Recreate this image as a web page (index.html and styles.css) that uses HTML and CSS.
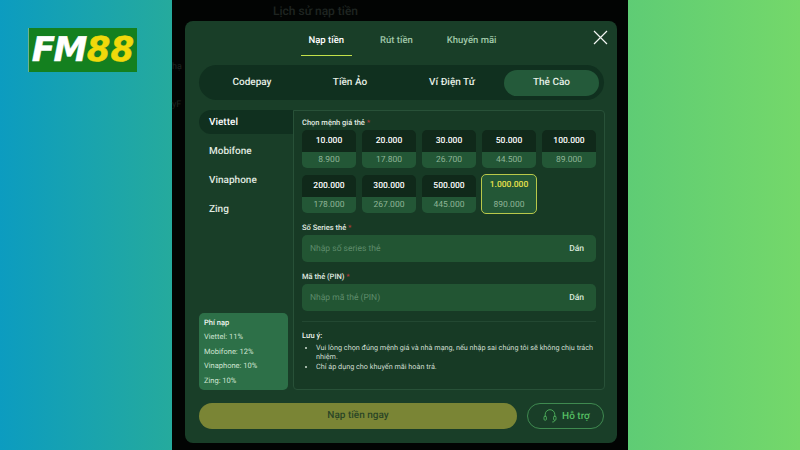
FILE: index.html
```html
<!DOCTYPE html>
<html lang="vi">
<head>
    <meta charset="UTF-8">
    <meta name="viewport" content="width=device-width, initial-scale=1.0">
    <title>FM88 - Nạp tiền</title>
    <link rel="stylesheet" href="styles.css">
</head>
<body>
    <div class="side-left">
        <div class="logo"><span class="logo-fm">FM</span><span class="logo-num">88</span></div>
    </div>

    <div class="stage">
        <div class="behind-title">Lịch sử nạp tiền</div>
        <div class="behind-a">hạ</div>
        <div class="behind-b">yF</div>

        <div class="modal">
            <div class="tabs">
                <div class="tab active">Nạp tiền</div>
                <div class="tab">Rút tiền</div>
                <div class="tab">Khuyến mãi</div>
            </div>
            <svg class="close" width="15" height="15" viewBox="0 0 15 15">
                <path d="M1 1L14 14M14 1L1 14" stroke="#f2f5f2" stroke-width="1.2" fill="none"/>
            </svg>

            <div class="methods">
                <div class="method">Codepay</div>
                <div class="method">Tiền Ảo</div>
                <div class="method">Ví Điện Tử</div>
                <div class="method active">Thẻ Cào</div>
            </div>

            <div class="content">
                <div class="carriers">
                    <div class="carrier active">Viettel</div>
                    <div class="carrier">Mobifone</div>
                    <div class="carrier">Vinaphone</div>
                    <div class="carrier">Zing</div>
                    <div class="fees">
                        <div class="fees-title">Phí nạp</div>
                        <div>Viettel: 11%</div>
                        <div>Mobifone: 12%</div>
                        <div>Vinaphone: 10%</div>
                        <div>Zing: 10%</div>
                    </div>
                </div>

                <div class="panel">
                    <div class="label label-first">Chọn mệnh giá thẻ <span class="req">*</span></div>
                    <div class="cards">
                        <div class="card"><div class="card-top">10.000</div><div class="card-bottom">8.900</div></div>
                        <div class="card"><div class="card-top">20.000</div><div class="card-bottom">17.800</div></div>
                        <div class="card"><div class="card-top">30.000</div><div class="card-bottom">26.700</div></div>
                        <div class="card"><div class="card-top">50.000</div><div class="card-bottom">44.500</div></div>
                        <div class="card"><div class="card-top">100.000</div><div class="card-bottom">89.000</div></div>
                        <div class="card"><div class="card-top">200.000</div><div class="card-bottom">178.000</div></div>
                        <div class="card"><div class="card-top">300.000</div><div class="card-bottom">267.000</div></div>
                        <div class="card"><div class="card-top">500.000</div><div class="card-bottom">445.000</div></div>
                        <div class="card selected"><div class="card-top">1.000.000</div><div class="card-bottom">890.000</div></div>
                    </div>

                    <div class="label label-series">Số Series thẻ <span class="req">*</span></div>
                    <div class="field">
                        <span class="placeholder">Nhập số series thẻ</span>
                        <span class="paste">Dán</span>
                    </div>

                    <div class="label label-pin">Mã thẻ (PIN) <span class="req">*</span></div>
                    <div class="field">
                        <span class="placeholder">Nhập mã thẻ (PIN)</span>
                        <span class="paste">Dán</span>
                    </div>

                    <div class="note">
                        <div class="note-title">Lưu ý:</div>
                        <ul>
                            <li>Vui lòng chọn đúng mệnh giá và nhà mạng, nếu nhập sai chúng tôi sẽ không chịu trách nhiệm.</li>
                            <li>Chỉ áp dụng cho khuyến mãi hoàn trả.</li>
                        </ul>
                    </div>
                </div>
            </div>

            <div class="actions">
                <div class="btn-submit">Nạp tiền ngay</div>
                <div class="btn-support">
                    <svg width="14" height="14" viewBox="0 0 14 14" fill="none" stroke="#55bf63" stroke-width="0.8">
                        <path d="M2.2 8V5.5a4.8 4.8 0 0 1 9.6 0V8"/>
                        <rect x="1" y="7.2" width="2.4" height="4" rx="1"/>
                        <rect x="10.6" y="7.2" width="2.4" height="4" rx="1"/>
                        <path d="M11.8 11.2c0 1.3-1 1.8-2.6 1.8"/>
                    </svg>
                    <span>Hỗ trợ</span>
                </div>
            </div>
        </div>
    </div>

    <div class="side-right"></div>
</body>
</html>
```

FILE: styles.css
```css
* {
    box-sizing: border-box;
}
html, body {
    margin: 0;
    height: 450px;
    overflow: hidden;
}
body {
    display: flex;
    font-family: Roboto, "Liberation Sans", sans-serif;
    text-rendering: geometricPrecision;
    background: linear-gradient(90deg, #0c9cc0 0%, #2fb08f 30%, #4cc27e 60%, #74d86a 100%);
    color: #fff;
}
.side-left {
    width: 172px;
    padding: 28px 0 0 28px;
}
.side-right {
    flex: 1;
}
.logo {
    width: 109px;
    height: 44px;
    background-color: #14801f;
    border-left: 1px solid #6fb38a;
    display: flex;
    align-items: center;
    justify-content: center;
    font-family: "DejaVu Sans", sans-serif;
    font-weight: bold;
    font-style: italic;
    font-size: 34px;
    line-height: 1;
    -webkit-text-stroke: 0.5px currentColor;
}
.logo-fm {
    color: #fff;
    letter-spacing: -1.5px;
}
.logo-num {
    color: #f0d90b;
    margin-left: 1px;
}

.stage {
    position: relative;
    width: 456px;
    height: 450px;
    background-color: #020403;
    padding: 21px 11px 0 13px;
}
.behind-title {
    position: absolute;
    left: 101px;
    top: 4px;
    font-size: 12px;
    font-weight: 500;
    color: #1f2421;
}
.behind-a, .behind-b {
    position: absolute;
    left: 0;
    font-size: 9px;
    color: #1f2421;
}
.behind-a {
    top: 62px;
}
.behind-b {
    top: 100px;
}

.modal {
    position: relative;
    width: 432px;
    height: 422px;
    background-color: #193e28;
    border-radius: 8px;
    padding: 10px 13px 0 14px;
}
.close {
    position: absolute;
    top: 9px;
    right: 9px;
}

.tabs {
    display: flex;
    justify-content: center;
    gap: 36px;
    height: 25px;
    margin-left: 2px;
}
.tab {
    font-size: 9.5px;
    font-weight: 500;
    color: #a0c8a8;
    padding: 0 8px;
    line-height: 19px;
    margin: 0 -8px;
}
.tab:last-child {
    margin-left: -10px;
}
.tab.active {
    color: #fff;
    border-bottom: 1px solid #c3e04a;
    height: 25px;
}

.methods {
    display: grid;
    grid-template-columns: 96px 100px 104px 95px;
    align-items: center;
    height: 35px;
    margin-top: 9px;
    padding: 0 6px 0 5px;
    background-color: #10301f;
    border-radius: 18px;
}
.method {
    height: 26px;
    line-height: 26px;
    text-align: center;
    font-size: 10px;
    font-weight: 500;
    color: #e6efe6;
    border-radius: 13px;
}
.method.active {
    background-color: #245a3a;
}

.content {
    display: flex;
    height: 280px;
    margin-top: 10px;
}
.carriers {
    width: 94px;
    display: flex;
    flex-direction: column;
    flex-shrink: 0;
}
.carrier {
    height: 24px;
    line-height: 26px;
    padding-left: 10px;
    margin-bottom: 5px;
    font-size: 10px;
    font-weight: 500;
    color: #e0ebe1;
}
.carrier.active {
    background-color: #10301f;
    border-radius: 12px 0 0 12px;
    color: #fff;
}
.fees {
    margin-top: auto;
    width: 89px;
    height: 77px;
    padding: 3px 5px;
    background-color: #2d7048;
    border-radius: 5px;
    font-size: 7.5px;
    line-height: 14.4px;
    color: #cfe4d2;
}
.fees-title {
    font-weight: 500;
    color: #f0f6f0;
}

.panel {
    flex: 1;
    padding: 7px 8px 0 8px;
    background-color: #173a25;
    border: 1px solid #285138;
    border-radius: 0 4px 4px 4px;
}
.label {
    font-size: 7.5px;
    font-weight: 500;
    line-height: 10px;
    color: #e0ebe1;
}
.label-first {
    margin-bottom: 2px;
}
.label-series, .label-pin {
    margin-top: 10px;
    margin-bottom: 2px;
}
.req {
    color: #b53a3a;
}
.cards {
    display: grid;
    grid-template-columns: repeat(5, 54px);
    gap: 7px 6px;
}
.card {
    height: 38px;
    border-radius: 5px;
    overflow: hidden;
    text-align: center;
    font-size: 8.5px;
}
.card-top {
    height: 22px;
    line-height: 22px;
    background-color: #10291a;
    font-weight: 500;
    color: #fff;
}
.card-bottom {
    height: 16px;
    line-height: 16px;
    background-color: #235736;
    color: #8fb597;
}
.card.selected {
    height: 40px;
    margin: -1px;
    border: 1px solid #b8c84a;
    background-color: #235736;
}
.card.selected .card-top {
    background: none;
    color: #e9e24c;
    line-height: 21px;
}
.card.selected .card-bottom {
    background: none;
}
.field {
    display: flex;
    align-items: center;
    justify-content: space-between;
    height: 27px;
    padding: 0 12px 0 8px;
    background-color: #225533;
    border-radius: 5px;
    font-size: 8.5px;
}
.placeholder {
    color: #5f8c6b;
}
.paste {
    font-weight: 500;
    color: #d8e8da;
}
.note {
    margin-top: 10px;
    padding-top: 9px;
    border-top: 1px solid #234832;
    font-size: 7.25px;
    line-height: 9.6px;
    color: #d0dfd2;
}
.note-title {
    font-weight: 500;
    font-size: 7.5px;
    color: #f0f6f0;
    margin-bottom: 2px;
}
.note ul {
    margin: 0;
    padding-left: 14px;
}

.actions {
    display: flex;
    gap: 10px;
    margin-top: 13px;
}
.btn-submit {
    flex: 1;
    height: 26px;
    line-height: 26px;
    text-align: center;
    background-color: #7a8535;
    border-radius: 13px;
    font-size: 10px;
    font-weight: 500;
    color: #2a4526;
}
.btn-support {
    width: 77px;
    height: 26px;
    display: flex;
    align-items: center;
    justify-content: center;
    gap: 5px;
    padding-left: 2px;
    border: 1px solid #3f8a50;
    border-radius: 13px;
    font-size: 10px;
    font-weight: 500;
    color: #55bf63;
}
```
